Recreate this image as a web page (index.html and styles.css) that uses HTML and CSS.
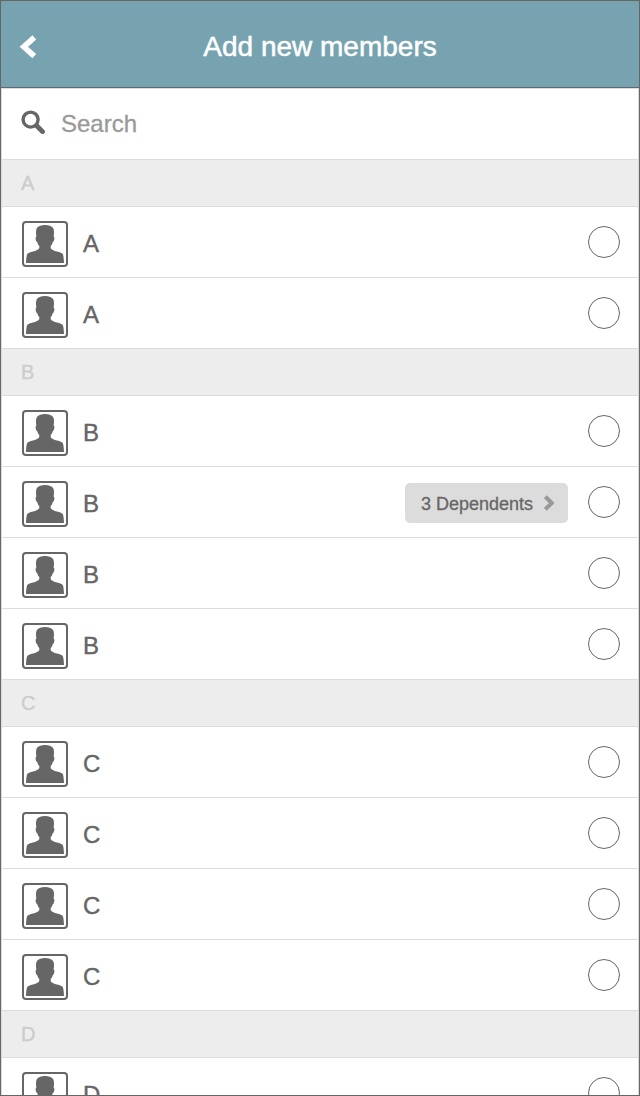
FILE: index.html
```
<!DOCTYPE html>
<html lang="en">
<head>
<meta charset="utf-8">
<title>Add new members</title>
<link rel="stylesheet" href="styles.css">
</head>
<body>
<svg class="sprite" aria-hidden="true">
  <symbol id="person" viewBox="0 0 46 46">
    <rect x="1" y="1" width="44" height="44" rx="3" fill="#fff" stroke="#666" stroke-width="2"/>
    <path fill="#666" d="M4 42C4.100 38.500 4.500 35.500 5 33.600C5.600 32 8 31.200 11 30.500C14 29.700 16.600 28.600 17.200 27.200C17.400 26.300 17.400 25.600 17.200 24.800C16.200 23.900 15.700 22.800 15.400 21.400C14.200 20.600 13.500 18.800 13.600 17C13.700 16.200 14.100 15.800 14.400 15.600C13.900 13 13.800 10 14.500 7.800C15.700 5.200 19 4 23 4C27 4 30.300 5.200 31.500 7.800C32.200 10 32.100 13 31.600 15.600C31.900 15.800 32.300 16.200 32.400 17C32.500 18.800 31.800 20.600 30.600 21.400C30.300 22.800 29.800 23.900 28.800 24.800C28.600 25.600 28.600 26.300 28.800 27.200C29.400 28.600 32 29.700 35 30.500C38 31.200 40.400 32 41 33.600C41.500 35.500 41.900 38.500 42 42Z"/>
  </symbol>
</svg>
<div class="screen">
  <header class="header">
    <svg class="back" viewBox="0 0 18 24"><path d="M15.300 2.400L4.800 11.800L15.300 21.200" fill="none" stroke="#fff" stroke-width="5.600"/></svg>
    <h1 class="title">Add new members</h1>
  </header>
  <main class="content">
    <div class="search">
      <svg class="search-icon" viewBox="0 0 24 24"><circle cx="9.600" cy="9.600" r="7.500" fill="none" stroke="#666" stroke-width="3.400"/><path d="M15.500 15.500L21.500 21.700" stroke="#666" stroke-width="4.800" stroke-linecap="round"/></svg>
      <span class="placeholder">Search</span>
    </div>
    <h2 class="section">A</h2>
    <div class="row"><svg class="avatar"><use href="#person"/></svg><span class="name">A</span><span class="radio"></span></div>
    <div class="row"><svg class="avatar"><use href="#person"/></svg><span class="name">A</span><span class="radio"></span></div>
    <h2 class="section">B</h2>
    <div class="row"><svg class="avatar"><use href="#person"/></svg><span class="name">B</span><span class="radio"></span></div>
    <div class="row"><svg class="avatar"><use href="#person"/></svg><span class="name">B</span><span class="dependents">3 Dependents<svg class="more" viewBox="0 0 10 16"><path d="M1.300 1.700L7.800 8L1.300 14.300" fill="none" stroke="#999" stroke-width="4"/></svg></span><span class="radio"></span></div>
    <div class="row"><svg class="avatar"><use href="#person"/></svg><span class="name">B</span><span class="radio"></span></div>
    <div class="row"><svg class="avatar"><use href="#person"/></svg><span class="name">B</span><span class="radio"></span></div>
    <h2 class="section">C</h2>
    <div class="row"><svg class="avatar"><use href="#person"/></svg><span class="name">C</span><span class="radio"></span></div>
    <div class="row"><svg class="avatar"><use href="#person"/></svg><span class="name">C</span><span class="radio"></span></div>
    <div class="row"><svg class="avatar"><use href="#person"/></svg><span class="name">C</span><span class="radio"></span></div>
    <div class="row"><svg class="avatar"><use href="#person"/></svg><span class="name">C</span><span class="radio"></span></div>
    <h2 class="section">D</h2>
    <div class="row"><svg class="avatar"><use href="#person"/></svg><span class="name">D</span><span class="radio"></span></div>
  </main>
</div>
</body>
</html>
```
FILE: styles.css
```
* { box-sizing: border-box; }
body { margin: 0; font-family: "Liberation Sans", Arial, sans-serif; color: #666; background: #fff; }
.sprite { display: none; }
.screen { display: flex; flex-direction: column; height: 1096px; border: 1px solid #666; overflow: hidden; }
.header { flex: none; display: grid; grid-template-columns: 54px 1fr 54px; align-items: center; height: 87px; background: #77a3b0; border-bottom: 1px solid #5a6c72; }
.back { width: 18px; height: 24px; margin: 5px 0 0 18px; }
.title { margin: 6px 0 0; font-size: 28px; line-height: 32px; font-weight: 400; color: #fff; text-align: center; -webkit-text-stroke: 0.5px #fff; }
.content { flex: 1; min-height: 0; overflow: hidden; border: solid #dcdcdc; border-width: 1px 1px 0; }
.search { display: flex; align-items: flex-start; height: 71px; padding: 21px 0 0 19px; border-bottom: 1px solid #dcdcdc; }
.search-icon { width: 24px; height: 24px; }
.placeholder { margin-left: 16px; font-size: 24px; line-height: 28px; color: #999; -webkit-text-stroke: 0.3px #999; }
.section { height: 47px; margin: 0; padding: 11px 0 0 19px; font-size: 20px; line-height: 24px; font-weight: 400; color: #ccc; background: #ededed; border-bottom: 1px solid #dcdcdc; -webkit-text-stroke: 0.3px #ccc; }
.row { display: flex; align-items: flex-start; height: 71px; padding: 14px 18px 0 20px; border-bottom: 1px solid #dcdcdc; }
.avatar { flex: none; width: 46px; height: 46px; }
.name { flex: 1; margin: 9px 0 0 15px; font-size: 24px; line-height: 28px; -webkit-text-stroke: 0.4px #666; }
.radio { width: 32px; height: 32px; margin-top: 5px; border: 1px solid #666; border-radius: 50%; }
.dependents { display: flex; align-items: center; width: 163px; height: 40px; margin: 2px 20px 0 0; padding: 2px 0 0 16px; border-radius: 5px; background: #dcdcdc; font-size: 18px; line-height: 20px; -webkit-text-stroke: 0.3px #666; }
.more { width: 10px; height: 16px; margin: -2px 0 0 11px; }
```
